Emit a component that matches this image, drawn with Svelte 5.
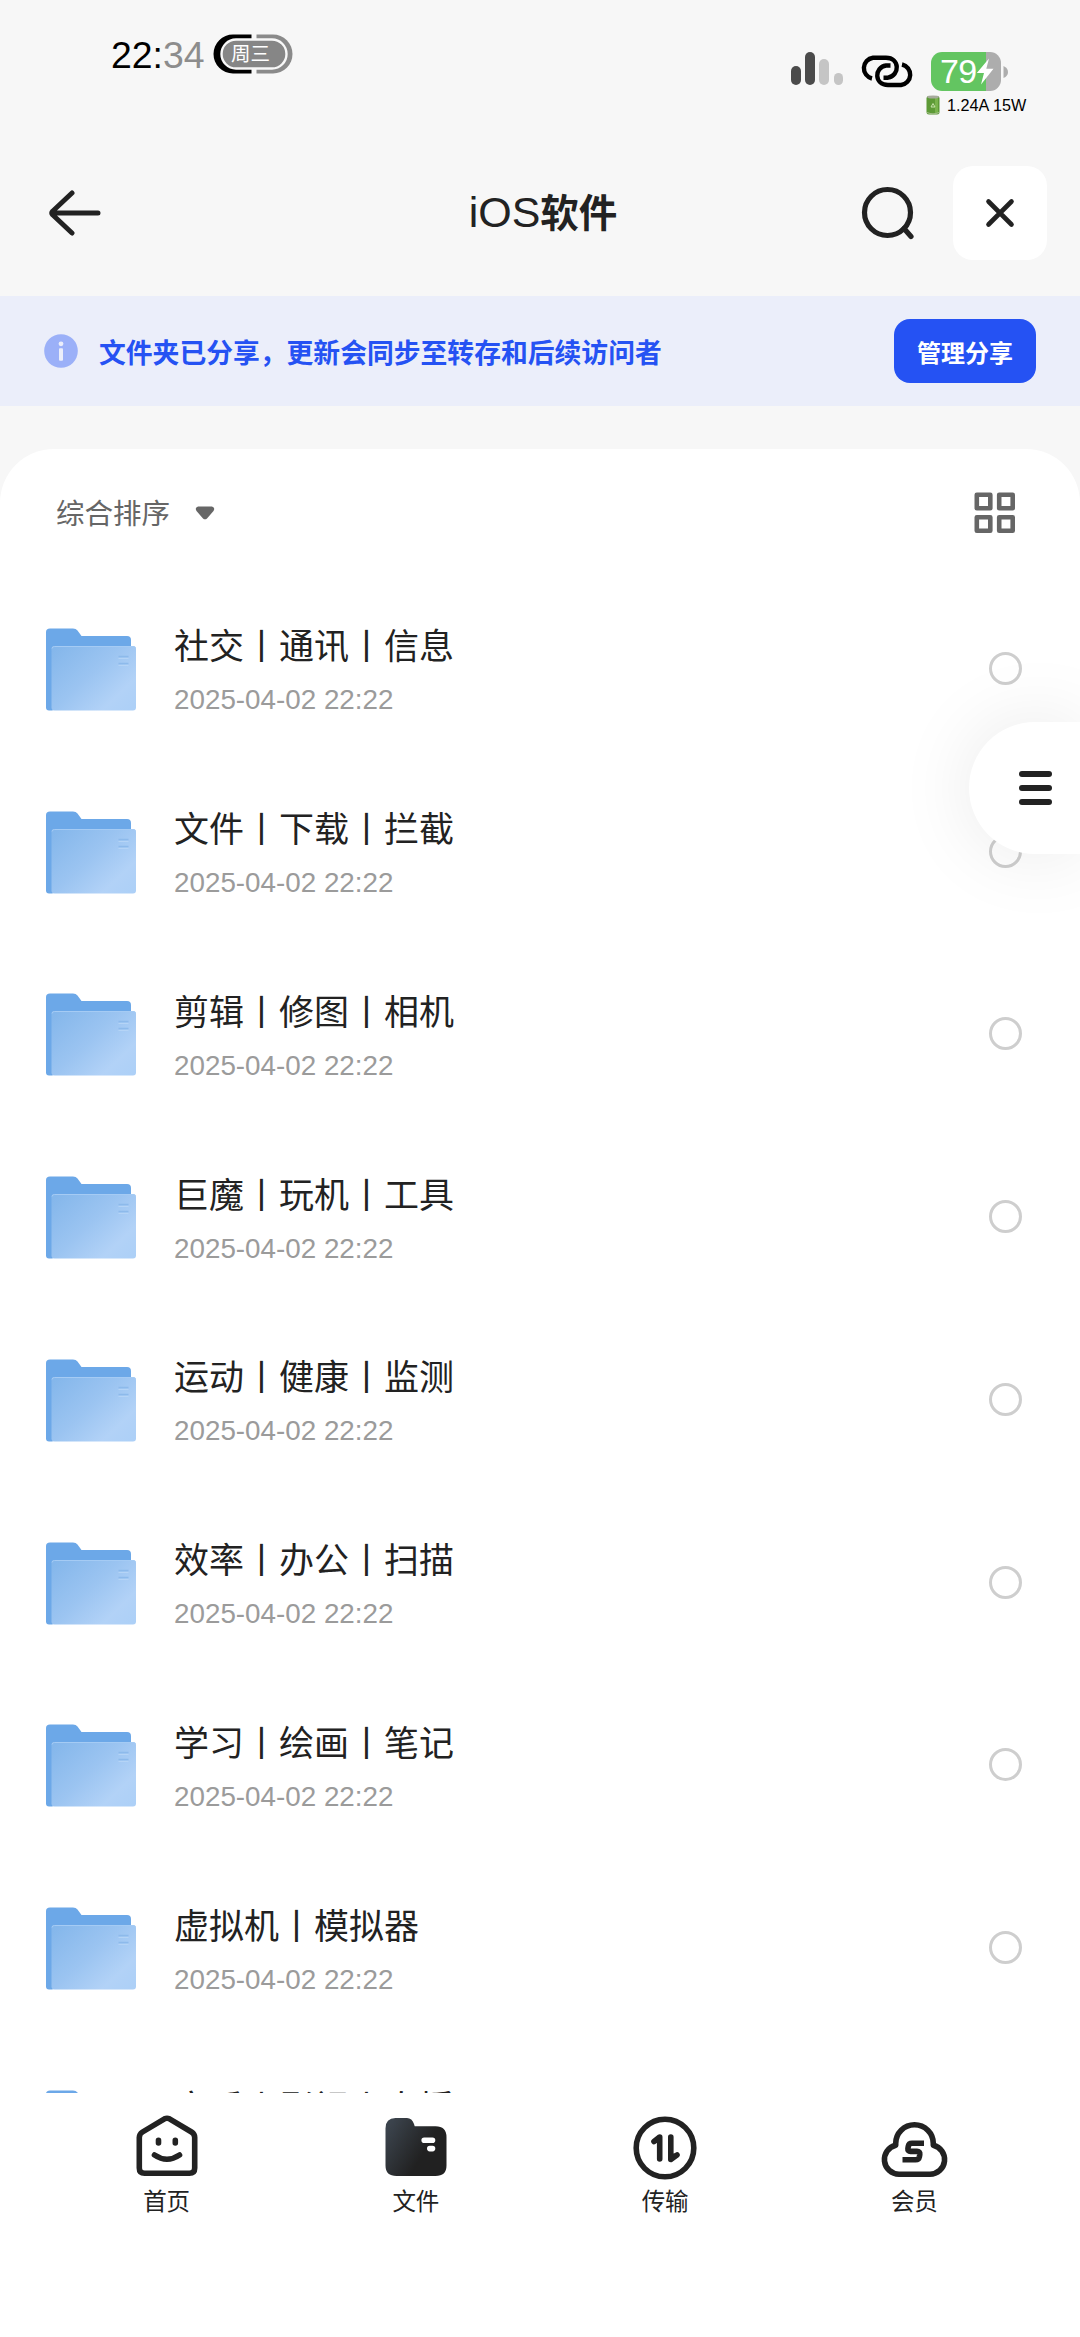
<script lang="ts">
  const date = "2025-04-02 22:22";

  const folders = [
    "社交丨通讯丨信息",
    "文件丨下载丨拦截",
    "剪辑丨修图丨相机",
    "巨魔丨玩机丨工具",
    "运动丨健康丨监测",
    "效率丨办公丨扫描",
    "学习丨绘画丨笔记",
    "虚拟机丨模拟器",
    "音乐丨影视丨直播",
  ];

  const tabs = [
    { id: "home", label: "首页" },
    { id: "files", label: "文件" },
    { id: "transfer", label: "传输" },
    { id: "member", label: "会员" },
  ];

  const signal = [
    { height: 19, on: true },
    { height: 33, on: true },
    { height: 26, on: false },
    { height: 12, on: false },
  ];
</script>

<div class="screen">
  <div class="status">
    <div class="clock">22:<span>34</span></div>
    <div class="day">
      <svg width="80" height="40" viewBox="0 0 80 40">
        <path d="M38.5 0.5H20a19.5 19.5 0 0 0 0 39H38.5Z" fill="#000" />
        <path d="M43.5 0.5H60a19.5 19.5 0 0 1 0 39H43.5Z" fill="#8a8a8a" />
        <rect x="8.5" y="5.5" width="65" height="29" rx="14.5" fill="#868686" stroke="#f8f8f8" stroke-width="2.4" />
      </svg>
      <span>周三</span>
    </div>
    <div class="signal">
      {#each signal as bar}
        <i class:on={bar.on} style="height: {bar.height}px"></i>
      {/each}
    </div>
    <svg class="link" width="54" height="33" viewBox="0 0 54 33" fill="none" stroke="#000" stroke-width="4.4">
      <path d="M12 23.5A10.6 10.6 0 0 1 13 2.7H26C40 2.7 40 20.5 28 22.7H23.5" />
      <path d="M42 9.5A10.4 10.4 0 0 1 41 30H28C14 30 14 12.3 26 10.5H30.5" />
    </svg>
    <div class="power">
      <div class="battery">
        <div class="level">
          <span>79</span>
          <svg width="18" height="27" viewBox="0 0 18 27">
            <path d="M13 0.5 0.8 15H8L5 26.5 17.5 10.8H10.3Z" fill="#fff" />
          </svg>
        </div>
        <svg width="5" height="12" viewBox="0 0 5 12"><path d="M0.5 0Q5 2 5 6T0.5 12Z" fill="#adadad" /></svg>
      </div>
      <div class="watts">
        <svg width="14" height="20" viewBox="0 0 14 20">
          <rect x="0.5" y="1" width="13" height="18.5" rx="2.5" fill="#5d9a36" />
          <rect x="9" y="2" width="3" height="16" fill="#79b34c" />
          <ellipse cx="7" cy="2" rx="6" ry="1.6" fill="#a6aa9c" />
          <path d="M1 17.5Q7 20 13 17.5" fill="none" stroke="#a3bd8b" stroke-width="1.2" />
          <path d="M7 8.5 9 12H5Z" fill="none" stroke="#c9e3ac" />
        </svg>
        1.24A 15W
      </div>
    </div>
  </div>

  <header>
    <svg class="back" width="52" height="48" viewBox="0 0 52 48" fill="none" stroke="#222" stroke-width="5" stroke-linecap="round" stroke-linejoin="round">
      <path d="M49 24H3M23 4 3.6 22.2Q2 24 3.6 25.8L23 44" />
    </svg>
    <h1><span>iOS</span>软件</h1>
    <svg class="search" width="54" height="54" viewBox="0 0 54 54" fill="none" stroke="#222" stroke-width="5.2">
      <circle cx="26.5" cy="26.5" r="23" />
      <path d="M43 42.5 50 50.5" stroke-linecap="round" />
    </svg>
    <button class="close" aria-label="关闭">
      <svg width="30" height="30" viewBox="0 0 30 30" stroke="#222" stroke-width="4.6" stroke-linecap="round">
        <path d="M3.5 3.5 26.5 26.5M26.5 3.5 3.5 26.5" />
      </svg>
    </button>
  </header>

  <div class="notice">
    <svg width="34" height="34" viewBox="0 0 34 34">
      <circle cx="17" cy="17" r="16.8" fill="#9bb0f8" />
      <circle cx="17" cy="9.8" r="2.4" fill="#ebeefa" />
      <rect x="15" y="14.3" width="4" height="12.4" rx="1" fill="#ebeefa" />
    </svg>
    <p>文件夹已分享，更新会同步至转存和后续访问者</p>
    <button>管理分享</button>
  </div>

  <main>
    <div class="sort">
      <span>综合排序</span>
      <svg class="caret" width="20" height="14" viewBox="0 0 20 14">
        <path d="M3 0.5H17Q20.5 1.5 18.5 5L12 12.4Q10 14.2 8 12.4L1.5 5Q-0.5 1.5 3 0.5Z" fill="#666" />
      </svg>
      <svg class="grid" width="42" height="42" viewBox="0 0 42 42" fill="none" stroke="#666" stroke-width="4.6" stroke-linejoin="round">
        <path d="M2.8 2.8h13.5v13.5H2.8zM25.2 2.8h13.5v13.5H25.2zM2.8 25.3h13.5v13.5H2.8zM25.2 25.3h13.5v13.5H25.2z" />
      </svg>
    </div>

    <ul>
      {#each folders as name}
        <li>
          <svg class="folder" width="90" height="83" viewBox="0 0 90 83">
            <defs>
              <linearGradient id="front" x1="0" y1="0.1" x2="1" y2="0.9">
                <stop offset="0" stop-color="#85b7eb" />
                <stop offset="0.45" stop-color="#9bc4f1" />
                <stop offset="0.8" stop-color="#b2d2f7" />
                <stop offset="1" stop-color="#add0f7" />
              </linearGradient>
            </defs>
            <path d="M0 4Q0 0.5 4 0.5H27Q30 0.5 31.5 2.5L35.5 8H81Q85 8 85 12V60L6 82.5H3Q0 82.5 0 79.5Z" fill="#6ca8e8" />
            <rect x="5.5" y="18" width="84.5" height="64.5" rx="3" fill="url(#front)" />
            <path d="M6 20.5Q6 18.5 8.5 18.5H87Q89.5 18.5 89.5 20.5" fill="none" stroke="#a5cbf4" />
            <path d="M72.5 28.5h10M72.5 35.5h10" stroke="#8dbaeb" stroke-width="1.4" />
            <path d="M72.5 30.5h10M72.5 37.5h10" stroke="#b5d4f6" />
          </svg>
          <div class="info">
            <h2>{name}</h2>
            <time>{date}</time>
          </div>
          <span class="radio"></span>
        </li>
      {/each}
    </ul>
  </main>

  <button class="menu" aria-label="菜单"><i></i><i></i><i></i></button>

  <nav>
    {#each tabs as tab}
      <div class="tab">
        <svg width="70" height="70" viewBox="0 0 70 70" fill="none" stroke="#222" stroke-width="5.6" stroke-linejoin="round" stroke-linecap="round">
          {#if tab.id === "home"}
            <path d="M32.5 5.8Q35 4.6 37.5 5.8L59.5 19Q62.7 21 62.7 24.5V55Q62.7 60.3 57.4 60.3H12.6Q7.3 60.3 7.3 55V24.5Q7.3 21 10.5 19Z" />
            <path d="M22.5 42Q35 50.5 47.5 42" />
            <path d="M26.5 27.4v2.6M43.3 27.4v2.6" />
          {:else if tab.id === "files"}
            <defs>
              <linearGradient id="dark" x1="0" y1="0.25" x2="0.62" y2="0.6">
                <stop offset="0" stop-color="#3b434c" />
                <stop offset="1" stop-color="#212121" />
              </linearGradient>
            </defs>
            <path d="M14.5 5H26Q31 5 33 11L33.7 13.3H54.5Q65.5 13.3 65.5 24.3V52.5Q65.5 63 54.5 63H15.5Q4.5 63 4.5 52.5V15.5Q4.5 5 14.5 5Z" fill="url(#dark)" stroke="none" />
            <path d="M43.2 27.2H51.5M48.8 35.6H51.5" stroke="#fff" />
          {:else if tab.id === "transfer"}
            <circle cx="35" cy="35" r="28.8" />
            <path d="M29.7 46V24L24 28.5M40.8 24V46.5L47 42" />
            <path d="M29 23 22.5 28.8H29ZM41.5 47.5 47.5 41.5H41.5Z" fill="#222" stroke-width="2" />
          {:else}
            <path d="M20 61.2H51A14.7 14.7 0 0 0 54.3 32.2V30.5A18.8 18.7 0 0 0 16.7 30.5V32.2A14.7 14.7 0 0 0 20 61.2Z" />
            <path d="M45 30.2H33Q29.8 30.2 29.3 33.2L28.9 35.6Q28.6 38.4 31.5 38.4H38Q41.2 38.4 40.8 41.4L40.4 43.8Q39.8 46.8 36.6 46.8H23.5" stroke-linecap="butt" />
          {/if}
        </svg>
        <span>{tab.label}</span>
      </div>
    {/each}
  </nav>
</div>

<style>
  :global(body) {
    background: #fff;
  }

  .screen {
    position: relative;
    width: 1080px;
    height: 2337px;
    overflow: hidden;
    background: #f7f7f7;
    color: #222;
    font-family: "Liberation Sans", "Noto Sans CJK SC", sans-serif;
    display: flex;
    flex-direction: column;
  }

  svg {
    display: block;
    flex: none;
  }

  h1,
  h2,
  p,
  ul {
    margin: 0;
    padding: 0;
    font-weight: normal;
  }

  button {
    border: 0;
    padding: 0;
    font: inherit;
  }

  .status {
    display: flex;
    align-items: flex-start;
    height: 130px;
    padding-left: 111px;
  }

  .clock {
    width: 102px;
    margin-top: 34px;
    font-size: 37.4px;
    line-height: 42px;
    color: #000;
  }

  .clock span {
    color: #8d8d8d;
  }

  .day {
    position: relative;
    margin-top: 34px;
  }

  .day span {
    position: absolute;
    left: 18px;
    top: 0;
    color: #fff;
    font-size: 19.5px;
    line-height: 40px;
  }

  .signal {
    display: flex;
    align-items: flex-end;
    gap: 4.7px;
    height: 33px;
    margin: 52px 0 0 498px;
  }

  .signal i {
    width: 9.5px;
    border-radius: 5px;
    background: #c5c5c5;
  }

  .signal .on {
    background: #4b4b4b;
  }

  .link {
    margin: 55px 0 0 17px;
  }

  .power {
    margin: 52px 0 0 12px;
  }

  .battery {
    display: flex;
    align-items: center;
    gap: 2px;
    margin-left: 5px;
  }

  .level {
    display: flex;
    align-items: center;
    width: 61px;
    height: 39px;
    padding-left: 9px;
    border-radius: 11px;
    background: linear-gradient(90deg, #63c561 55px, #adadad 55px);
    color: #fff;
    font-size: 34px;
    letter-spacing: -0.8px;
  }

  .watts {
    display: flex;
    align-items: center;
    gap: 7px;
    margin-top: 4px;
    font-size: 16.2px;
    line-height: 20px;
    color: #000;
    white-space: nowrap;
  }

  header {
    display: flex;
    align-items: center;
    height: 166px;
    padding: 0 33px 0 49px;
  }

  h1 {
    flex: 1;
    padding-left: 124px;
    text-align: center;
    font-size: 38.5px;
    font-weight: bold;
    line-height: 56px;
  }

  h1 span {
    font-size: 43px;
    font-weight: normal;
  }

  .search {
    margin-right: 38px;
  }

  .close {
    display: grid;
    place-items: center;
    width: 94px;
    height: 94px;
    border-radius: 20px;
    background: #fff;
  }

  .notice {
    display: flex;
    align-items: center;
    height: 110px;
    padding: 0 44px;
    background: #ebeefa;
  }

  .notice p {
    flex: 1;
    margin-left: 21px;
    color: #2552f3;
    font-size: 26.8px;
    font-weight: bold;
    white-space: nowrap;
  }

  .notice button {
    width: 142px;
    height: 64px;
    border-radius: 16px;
    background: #2552f3;
    color: #fff;
    font-size: 24px;
    font-weight: bold;
  }

  main {
    height: 1644px;
    margin-top: 43px;
    overflow: hidden;
    border-radius: 54px 54px 0 0;
    background: #fff;
  }

  .sort {
    display: flex;
    align-items: center;
    height: 127px;
    padding: 0 64px 0 56px;
    color: #666;
    font-size: 28.5px;
  }

  .sort span {
    margin-top: -3px;
  }

  .caret {
    margin-left: 25px;
  }

  .grid {
    margin-left: auto;
  }

  ul {
    list-style: none;
  }

  li {
    display: flex;
    align-items: center;
    height: 182.75px;
    padding: 0 58px 0 46px;
  }

  .folder {
    margin-top: 4px;
  }

  .info {
    flex: 1;
    margin-left: 38px;
    padding-top: 11px;
  }

  h2 {
    font-size: 35px;
    line-height: 52px;
  }

  time {
    display: block;
    margin-top: 4px;
    padding-bottom: 1px;
    color: #9b9b9b;
    font-size: 27.8px;
    line-height: 46px;
  }

  .radio {
    width: 27px;
    height: 27px;
    margin-top: 2px;
    border: 3px solid #cecece;
    border-radius: 50%;
  }

  .menu {
    position: absolute;
    top: 722px;
    right: 0;
    display: flex;
    flex-direction: column;
    justify-content: center;
    gap: 8px;
    width: 111px;
    height: 132px;
    padding-left: 50px;
    border-radius: 66px 0 0 66px;
    background: #fff;
    box-shadow: 0 0 80px rgba(0, 0, 0, 0.09);
  }

  .menu i {
    width: 33px;
    height: 6px;
    border-radius: 3px;
    background: #222;
  }

  nav {
    position: relative;
    display: flex;
    flex: 1;
    padding: 20px 41px 0 42px;
    background: #fff;
  }

  .tab {
    flex: 1;
    display: flex;
    flex-direction: column;
    align-items: center;
    font-size: 23.5px;
    line-height: 38px;
  }
</style>
